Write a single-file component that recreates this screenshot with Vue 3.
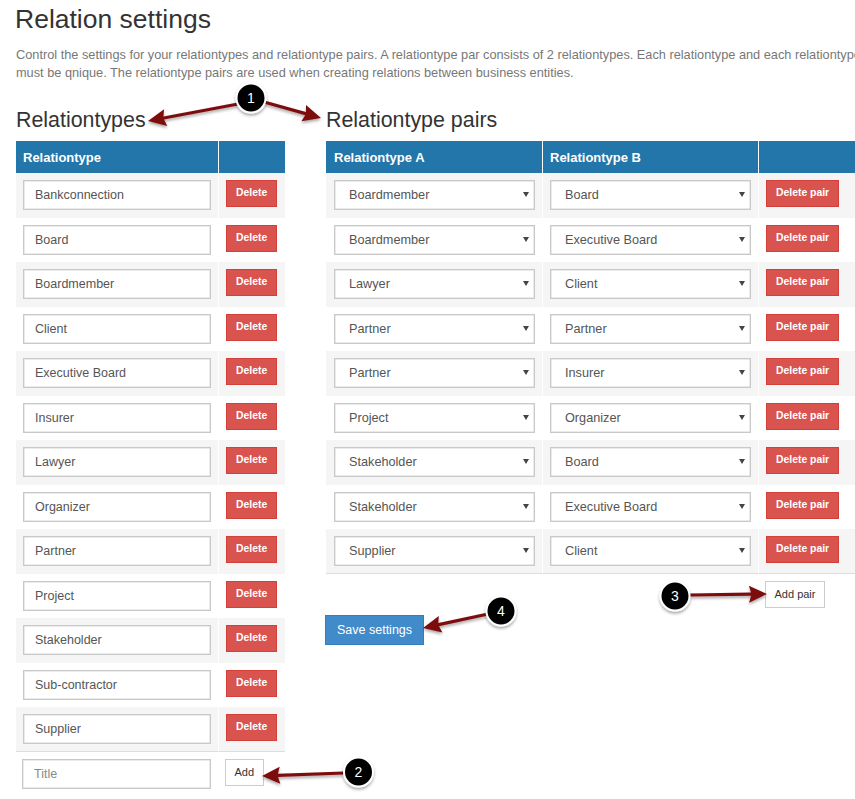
<template>
  <div class="page">
    <h1>Relation settings</h1>
    <p class="intro">
      Control the settings for your relationtypes and relationtype pairs. A relationtype par consists of 2 relationtypes. Each relationtype and each relationtype pair
      must be qnique. The relationtype pairs are used when creating relations between business entities.
    </p>

    <div class="columns">
      <section class="col-types">
        <h2>Relationtypes</h2>
        <table class="types">
          <thead>
            <tr>
              <th>Relationtype</th>
              <th></th>
            </tr>
          </thead>
          <tbody>
            <tr v-for="name in types" :key="name">
              <td><input class="field" :value="name" /></td>
              <td><button class="btn danger">Delete</button></td>
            </tr>
          </tbody>
        </table>
        <div class="add-row">
          <input class="field new" placeholder="Title" />
          <button class="btn plain">Add</button>
        </div>
      </section>

      <section class="col-pairs">
        <h2>Relationtype pairs</h2>
        <table class="pairs">
          <thead>
            <tr>
              <th>Relationtype A</th>
              <th>Relationtype B</th>
              <th></th>
            </tr>
          </thead>
          <tbody>
            <tr v-for="(pair, i) in pairs" :key="i">
              <td v-for="side in pair" :key="side">
                <div class="select-wrap">
                  <select class="field select">
                    <option>{{ side }}</option>
                  </select>
                </div>
              </td>
              <td><button class="btn danger">Delete pair</button></td>
            </tr>
          </tbody>
        </table>
        <div class="add-pair">
          <button class="btn plain">Add pair</button>
        </div>
        <button class="btn save">Save settings</button>
      </section>
    </div>

    <!-- annotation layer -->
    <svg class="notes" width="855" height="799">
      <defs>
        <filter id="soft" x="-30%" y="-30%" width="160%" height="160%">
          <feDropShadow dx="0" dy="2" stdDeviation="1.5" flood-color="#000" flood-opacity="0.35" />
        </filter>
      </defs>
      <path v-for="(a, i) in arrows" :key="i" :d="arrowPath(a)" fill="#7d0c10" filter="url(#soft)" />
      <g v-for="b in badges" :key="b.n">
        <circle :cx="b.x" :cy="b.y" r="14.5" fill="#000" stroke="#fff" stroke-width="2" filter="url(#soft)" />
        <text :x="b.x" :y="b.y + 5" text-anchor="middle" class="badge-num">{{ b.n }}</text>
      </g>
    </svg>
  </div>
</template>

<script setup>
const types = [
  "Bankconnection",
  "Board",
  "Boardmember",
  "Client",
  "Executive Board",
  "Insurer",
  "Lawyer",
  "Organizer",
  "Partner",
  "Project",
  "Stakeholder",
  "Sub-contractor",
  "Supplier"
];

const pairs = [
  ["Boardmember", "Board"],
  ["Boardmember", "Executive Board"],
  ["Lawyer", "Client"],
  ["Partner", "Partner"],
  ["Partner", "Insurer"],
  ["Project", "Organizer"],
  ["Stakeholder", "Board"],
  ["Stakeholder", "Executive Board"],
  ["Supplier", "Client"]
];

const badges = [
  { n: 1, x: 251, y: 98 },
  { n: 2, x: 358.5, y: 772 },
  { n: 3, x: 675, y: 596 },
  { n: 4, x: 501, y: 611 }
];

const arrows = [
  [238, 104, 148, 121],
  [264, 102, 321, 118],
  [344, 773, 262, 776],
  [690, 595, 767, 594],
  [488, 614, 423, 628]
];

// straight shaft with a triangular head
function arrowPath([x1, y1, x2, y2]) {
  const len = Math.hypot(x2 - x1, y2 - y1);
  const ux = (x2 - x1) / len;
  const uy = (y2 - y1) / len;
  const at = (along, side) =>
    `${(x2 - ux * along - uy * side).toFixed(1)} ${(y2 - uy * along + ux * side).toFixed(1)}`;
  return (
    `M${x2} ${y2}L${at(18, 8.5)}L${at(16, 1.6)}L${at(len, 1.6)}` +
    `L${at(len, -1.6)}L${at(16, -1.6)}L${at(18, -8.5)}Z`
  );
}
</script>

<style>
html,
body {
  margin: 0;
  background: #fff;
}
</style>

<style scoped>
.page {
  position: relative;
  width: 855px;
  height: 799px;
  overflow: hidden;
  padding-left: 16px;
  box-sizing: border-box;
  font-family: "Liberation Sans", Arial, sans-serif;
  font-size: 12.5px;
  color: #333;
}

h1 {
  margin: 0 0 0 -1px;
  padding-top: 4px;
  font-size: 26.5px;
  line-height: 30px;
  font-weight: 400;
}

.intro {
  width: 890px;
  margin: 12px 0 0;
  font-size: 12.75px;
  line-height: 18px;
  color: #777;
}

h2 {
  margin: 0;
  font-size: 21.4px;
  line-height: 24px;
  font-weight: 400;
  height: 33px;
}

.columns {
  display: flex;
  gap: 41px;
  margin-top: 26px;
}

.col-types {
  width: 269px;
  flex: none;
}

.col-pairs {
  width: 560px;
  flex: none;
}

table {
  border-collapse: separate;
  border-spacing: 0;
  table-layout: fixed;
  width: 100%;
}

.types th:first-child {
  width: 203px;
}

.pairs th:nth-child(1) {
  width: 217px;
}

.pairs th:nth-child(2) {
  width: 216px;
}

th {
  height: 32px;
  padding: 0 0 0 7px;
  box-sizing: border-box;
  background: #2276aa;
  color: #fff;
  font-size: 13px;
  font-weight: 700;
  text-align: left;
  border-right: 1px solid #fff;
}

th:last-child {
  border-right: 0;
}

.pairs th:first-child {
  padding-left: 8px;
}

td {
  height: 44.5px;
  padding: 7px 7px 0;
  box-sizing: border-box;
  vertical-align: top;
  border-right: 1px solid #fff;
}

td:last-child {
  border-right: 0;
}

.pairs td:first-child {
  padding-left: 8px;
}

tbody tr:nth-child(odd) td {
  background: #f5f5f5;
}

tbody tr:last-child td {
  border-bottom: 1px solid #ddd;
}

.field {
  display: block;
  width: 100%;
  height: 30px;
  padding: 0 11px;
  box-sizing: border-box;
  border: 1px solid #c9c9c9;
  border-radius: 0;
  background: #fff;
  font: inherit;
  color: #555;
  outline: none;
  box-shadow: inset 0 0 0 0.5px #d8d8d8;
}

.field::placeholder {
  color: #888;
}

.select-wrap {
  position: relative;
}

.select-wrap::after {
  content: "";
  position: absolute;
  right: 6px;
  top: 12px;
  border-left: 3px solid transparent;
  border-right: 3px solid transparent;
  border-top: 5px solid #444;
  pointer-events: none;
}

.select {
  appearance: none;
  padding: 0 14px;
  font-size: 12.7px;
}

.btn {
  display: block;
  border-radius: 0;
  font-family: inherit;
  cursor: pointer;
}

.danger {
  height: 27px;
  padding: 0 9px 2px;
  border: 1px solid #d43f3a;
  background: #d9534f;
  color: #fff;
  font-size: 10.4px;
  font-weight: 700;
}

.plain {
  height: 27px;
  padding: 0 8.5px 1px;
  border: 1px solid #ccc;
  background: #fff;
  color: #333;
  font-size: 11px;
}

.add-row {
  display: flex;
  gap: 14px;
  padding: 7px 0 0 6px;
}

.add-row .new {
  width: 189px;
  flex: none;
}

.add-pair {
  display: flex;
  padding: 7px 0 0 439px;
}

.save {
  height: 30px;
  margin: 7px 0 0 -1px;
  padding: 0 11px;
  border: 1px solid #357ebd;
  background: #428bca;
  color: #fff;
  font-size: 12.5px;
}

.notes {
  position: absolute;
  left: 0;
  top: 0;
  pointer-events: none;
}

.badge-num {
  fill: #fff;
  font-size: 14px;
  font-family: "Liberation Sans", Arial, sans-serif;
}
</style>
